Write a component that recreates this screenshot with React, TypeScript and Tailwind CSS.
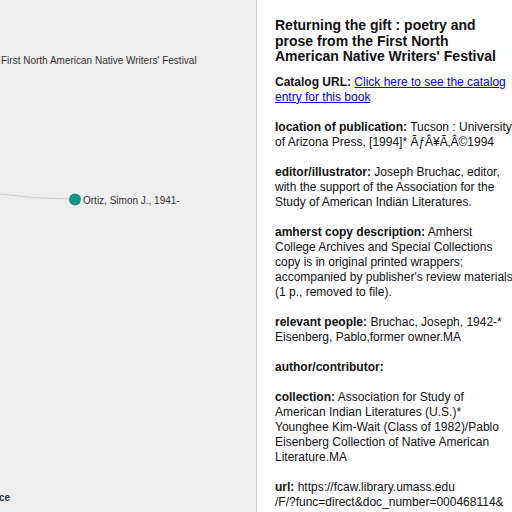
import React from "react"

const fields: { label: string; value: React.ReactNode }[] = [
  {
    label: "location of publication:",
    value: "Tucson : University of Arizona Press, [1994]* ÃƒÂ¥Ã‚Â©1994",
  },
  {
    label: "editor/illustrator:",
    value:
      "Joseph Bruchac, editor, with the support of the Association for the Study of American Indian Literatures.",
  },
  {
    label: "amherst copy description:",
    value:
      "Amherst College Archives and Special Collections copy is in original printed wrappers; accompanied by publisher's review materials (1 p., removed to file).",
  },
  {
    label: "relevant people:",
    value: "Bruchac, Joseph, 1942-* Eisenberg, Pablo,former owner.MA",
  },
  { label: "author/contributor:", value: "" },
  {
    label: "collection:",
    value:
      "Association for Study of American Indian Literatures (U.S.)* Younghee Kim-Wait (Class of 1982)/Pablo Eisenberg Collection of Native American Literature.MA",
  },
  {
    label: "url:",
    value: (
      <>
        https://fcaw.library.umass.edu
        <br />
        /F/?func=direct&amp;doc_number=000468114&amp;
      </>
    ),
  },
]

export default function App() {
  return (
    <div className="flex h-[512px] w-[512px] overflow-hidden bg-white font-['Liberation_Sans',Arial,sans-serif]">
      {/* Graph canvas */}
      <div className="relative h-full w-[257px] shrink-0 border-r border-[#cfcfcf] bg-[#eeeeee]">
        <svg width="256" height="512" className="absolute inset-0">
          <path d="M0 194 Q36 199 70 199" fill="none" stroke="#cccccc" strokeWidth="1" />
          <circle cx="75" cy="199.5" r="6" fill="#11978b" />
          <text x="1" y="63.5" fontSize="10" fill="#333" fontFamily="Liberation Sans, Arial, sans-serif">
            First North American Native Writers' Festival
          </text>
          <text x="83" y="203.5" fontSize="10" fill="#333" fontFamily="Liberation Sans, Arial, sans-serif">
            Ortiz, Simon J., 1941-
          </text>
          <text x="-1" y="500.5" fontSize="10" fontWeight="600" fill="#333" fontFamily="Liberation Sans, Arial, sans-serif">
            ce
          </text>
        </svg>
      </div>

      {/* Details panel */}
      <div className="w-[240px] shrink-0 pl-[18px] pt-[18px] text-[12px] leading-[15px] text-[#111]">
        <h2 className="w-[240px] text-[14px] font-bold leading-[15.5px] text-[#111]">
          Returning the gift : poetry and prose from the First North American Native Writers' Festival
        </h2>

        <p className="mt-[10px] w-[240px]">
          <b>Catalog URL: </b>
          <a href="#" className="text-[#0000ee] underline">
            Click here to see the catalog entry for this book
          </a>
        </p>

        {fields.map((f) => (
          <p key={f.label} className="mt-[15px] w-[240px]">
            <b>{f.label}</b> {f.value}
          </p>
        ))}
      </div>
    </div>
  )
}
